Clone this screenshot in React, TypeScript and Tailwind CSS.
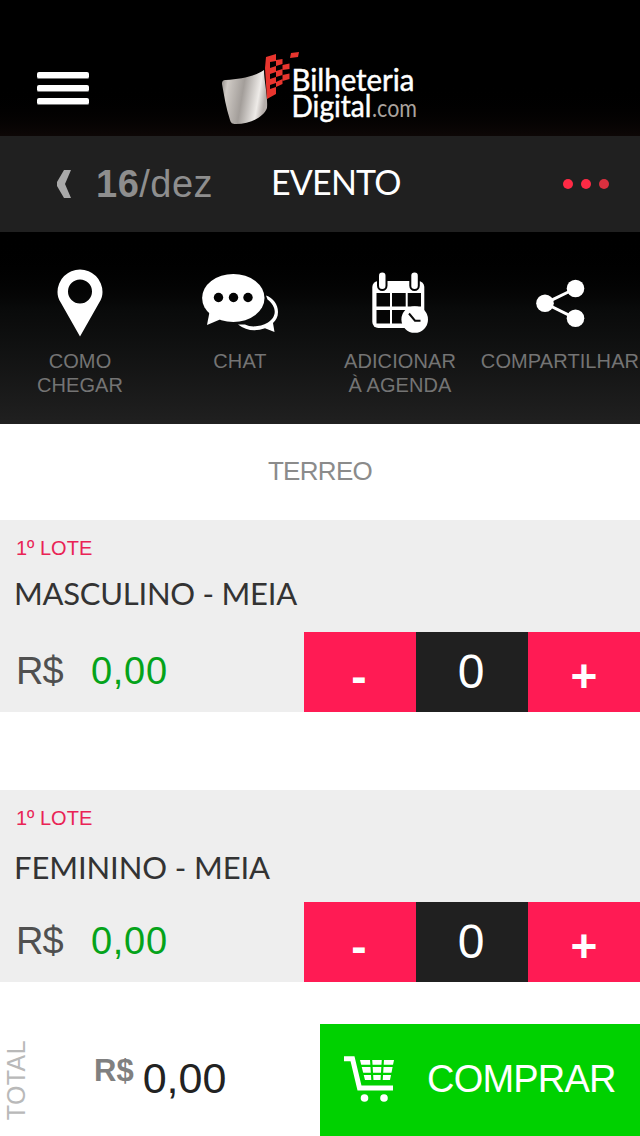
import type { ReactNode } from "react";

const TICKETS = [
  { name: "MASCULINO - MEIA", lot: "1º LOTE", price: "0,00", qty: 0, nameClass: "mt-[13px] tracking-[-0.25px]" },
  { name: "FEMININO - MEIA", lot: "1º LOTE", price: "0,00", qty: 0, nameClass: "mt-[17px] tracking-[-0.1px]" },
];

interface ActionProps {
  viewBox: string;
  lines: string[];
  children: ReactNode;
}

function Action({ viewBox, lines, children }: ActionProps) {
  return (
    <button className="flex w-40 flex-col items-center pt-8">
      <svg viewBox={viewBox} className="h-20 w-40" fill="#fff">
        {children}
      </svg>
      <span className="mt-[5px] text-center text-[20px] leading-6 tracking-[0.1px] whitespace-nowrap text-[#747474]">
        {lines.map((line) => (
          <span key={line} className="block">{line}</span>
        ))}
      </span>
    </button>
  );
}

function Logo() {
  return (
    <svg viewBox="216 46 220 90" className="h-[90px] w-[220px]">
      <defs>
        <linearGradient id="ticket" x1="0" y1="0.1" x2="1" y2="0.3">
          <stop offset="0" stopColor="#8f8a86" />
          <stop offset="0.15" stopColor="#cfcac5" />
          <stop offset="0.5" stopColor="#a39e9a" />
          <stop offset="0.85" stopColor="#eeebe8" />
          <stop offset="1" stopColor="#b5aeaa" />
        </linearGradient>
      </defs>
      <path
        d="M226 80 C240 79 254 77 264 70 C264 80 268 97 267 108 C264 117 250 124 236 124 C232 124 231 123 230 120 C226 108 224 95 222 84 C222 81 223 80 226 80Z"
        fill="url(#ticket)"
      />
      <g fill="#e8352e">
        <path d="M265 68 L266 57 L276 54 V61 L270 62 V68 L276 66 V72 L270 74 V79 L276 77 V83 L270 85 V89 L276 87 V94 L267 99Z" />
        <path d="M276 60 L282.500 59 V64 L276 66Z M276 71 L282.500 69 V75 L276 77Z M276 82 L282.500 79 V84 L276 87Z" />
        <path d="M282.500 65 L289.500 63.500 V69 L282.500 70Z M282.500 75 L289.500 73.500 V79 L282.500 81Z M291 53 L299 52 L298 57 L290 58Z" />
      </g>
      <g fontFamily="Lato, sans-serif" fill="#fff" fontSize="31" stroke="#fff" strokeWidth="0.5">
        <text x="291.500" y="90.500" textLength="123" lengthAdjust="spacingAndGlyphs">Bilheteria</text>
        <text x="291.500" y="117" textLength="80" lengthAdjust="spacingAndGlyphs">Digital</text>
      </g>
      <text x="372" y="117" textLength="45" lengthAdjust="spacingAndGlyphs" fontFamily="Lato, sans-serif" fontSize="25" fill="#aaa39e">.com</text>
    </svg>
  );
}

export default function App() {
  return (
    <div className="flex h-[1136px] w-[640px] flex-col overflow-hidden bg-white font-['Liberation_Sans',sans-serif]">
      <header className="flex h-[136px] items-start bg-linear-to-b from-black from-60% to-[#0d0706] pt-[46px]">
        <button className="mt-[26px] ml-[37px] flex w-[52px] flex-col gap-[6px]">
          {[0, 1, 2].map((i) => (
            <span key={i} className="h-[7px] rounded-[2px] border-b border-[#777] bg-white" />
          ))}
        </button>
        <div className="ml-[127px]">
          <Logo />
        </div>
      </header>

      <nav className="flex h-24 items-center bg-[#202020]">
        <button className="flex w-[271px] items-center pl-[56px] text-[38px] leading-none text-[#8e8e8e]">
          <svg viewBox="0 0 16 28" className="h-7 w-4" fill="#a9a9a9">
            <path d="M8 0 H15 L9 14 L15 28 H8 L1 16 V12Z" />
          </svg>
          <span className="-mt-px ml-6 tracking-[0.5px]"><b>16</b>/dez</span>
        </button>
        <h1 className="-mt-[5px] w-[292px] font-['Lato',sans-serif] text-[34px] leading-none tracking-[-0.8px] text-white">EVENTO</h1>
        <button className="flex gap-[8px]">
          <span className="size-[10px] rounded-full bg-[#ff2a45]" />
          <span className="size-[10px] rounded-full bg-[#ff2a45]" />
          <span className="size-[10px] rounded-full bg-[#d9303f]" />
        </button>
      </nav>

      <section className="flex h-48 bg-linear-to-b from-black via-[#090a0a] via-40% to-[#202020]">
        <Action viewBox="0 264 160 80" lines={["COMO", "CHEGAR"]}>
          <path
            fillRule="evenodd"
            d="M80 336.5 L61 303 C58.5 299 57.5 296 57.5 292 A22.5 22.5 0 0 1 102.5 292 C102.5 296 101.5 299 99 303Z M80 279.500 A12 12 0 1 0 80 303.500 A12 12 0 1 0 80 279.500Z"
          />
        </Action>
        <Action viewBox="160 264 160 80" lines={["CHAT"]}>
          <ellipse cx="233.300" cy="298" rx="31.200" ry="24" />
          <path d="M209.500 312 L207 325 L220 319.500Z" />
          <g fill="#030303">
            <circle cx="218.500" cy="297.500" r="4.700" />
            <circle cx="233.500" cy="297.500" r="4.700" />
            <circle cx="248" cy="297.500" r="4.700" />
          </g>
          <path d="M266 295.500 C273 298 278 304 278 312 C278 317 276 320 273 323 L274.500 332 L265 328.300 C256 331.500 246 331 238 324.500 L245 324.500 C251 327.500 260 327 268 322.500 C278 316 276 306 267.500 299.500Z" />
        </Action>
        <Action viewBox="320 264 160 80" lines={["ADICIONAR", "À AGENDA"]}>
          <rect x="372.300" y="281" width="52" height="47" rx="6" />
          <path
            fill="#050505"
            d="M376.500 293H390V306.500H376.500Z M392 293H405.700V306.500H392Z M407.700 293H421V306.500H407.700Z M376.500 310H390V323.500H376.500Z M392 310H405.700V323.500H392Z"
          />
          <rect x="379" y="272.500" width="6.500" height="16.500" rx="3.250" stroke="#030303" strokeWidth="4" paintOrder="stroke" />
          <rect x="411.300" y="272.500" width="6.500" height="16.500" rx="3.250" stroke="#030303" strokeWidth="4" paintOrder="stroke" />
          <circle cx="414.700" cy="319.500" r="13.300" />
          <path d="M409 313.500 L415 320.700 H420.500" fill="none" stroke="#0a0a0a" strokeWidth="2" />
        </Action>
        <Action viewBox="480 264 160 80" lines={["COMPARTILHAR"]}>
          <path d="M575.500 288.500 L545 303.300 L575.500 318.300" fill="none" stroke="#fff" strokeWidth="3" />
          <circle cx="545" cy="303.300" r="8.800" />
          <circle cx="575.500" cy="288.500" r="8.800" />
          <circle cx="575.500" cy="318.300" r="8.800" />
        </Action>
      </section>

      <h2 className="h-24 text-center text-[26px] leading-[95px] tracking-[-0.7px] text-[#8b8b8b]">TERREO</h2>

      <main className="flex flex-col gap-[78px]">
        {TICKETS.map((ticket) => (
          <article key={ticket.name} className="flex h-48 flex-col justify-between bg-[#eee]">
            <div className="pt-4 pl-4">
              <p className="text-[20px] leading-6 text-[#e92355]">{ticket.lot}</p>
              <h3 className={`-ml-[2px] font-['Lato',sans-serif] text-[31px] leading-10 text-[#333] ${ticket.nameClass}`}>
                {ticket.name}
              </h3>
            </div>
            <div className="flex h-20 text-[38px] leading-[78px]">
              <span className="w-[76px] pl-4 tracking-[-1px] text-[#505050]">R$</span>
              <span className="w-[228px] pl-[15px] tracking-[0.7px] text-[#05a31a]">{ticket.price}</span>
              <button className="w-28 bg-[#ff1b54] pr-[2px] text-[46px] leading-[88px] font-bold text-white">-</button>
              <span className="w-28 bg-[#202020] pr-[2px] text-center text-[48px] leading-[80px] text-white">{ticket.qty}</span>
              <button className="w-28 bg-[#ff1b54] text-[46px] leading-[88px] font-bold text-white">+</button>
            </div>
          </article>
        ))}
      </main>

      <footer className="mt-auto flex h-28">
        <div className="flex w-8 items-center">
          <span className="rotate-180 text-[25px] leading-8 tracking-[0.4px] text-[#b9b9b9] [writing-mode:vertical-rl]">TOTAL</span>
        </div>
        <div className="flex w-72 items-start pl-[62px]">
          <span className="mt-[31px] text-[31px] leading-8 font-bold text-[#808080]">R$</span>
          <span className="mt-[30px] ml-[9px] text-[43px] leading-12 text-[#222]">0,00</span>
        </div>
        <button className="flex w-80 items-center bg-[#00d100] text-white">
          <svg viewBox="340 1050 60 60" className="ml-5 size-[60px]" fill="#fff">
            <path d="M344 1058.700 H352.500 L359.500 1088 H393" fill="none" stroke="#fff" strokeWidth="5" />
            <path d="M360 1060 H394 L390 1080 H365Z" />
            <path d="M360 1065.800H398 M361 1073.800H398 M371 1058L372.500 1082 M383 1058L381.500 1082" stroke="#00d100" strokeWidth="2.200" />
            <circle cx="364.500" cy="1098" r="3.800" />
            <circle cx="384" cy="1098" r="3.800" />
          </svg>
          <span className="-mt-[2px] ml-[27px] text-[38px] leading-none tracking-[-0.8px]">COMPRAR</span>
        </button>
      </footer>
    </div>
  );
}
